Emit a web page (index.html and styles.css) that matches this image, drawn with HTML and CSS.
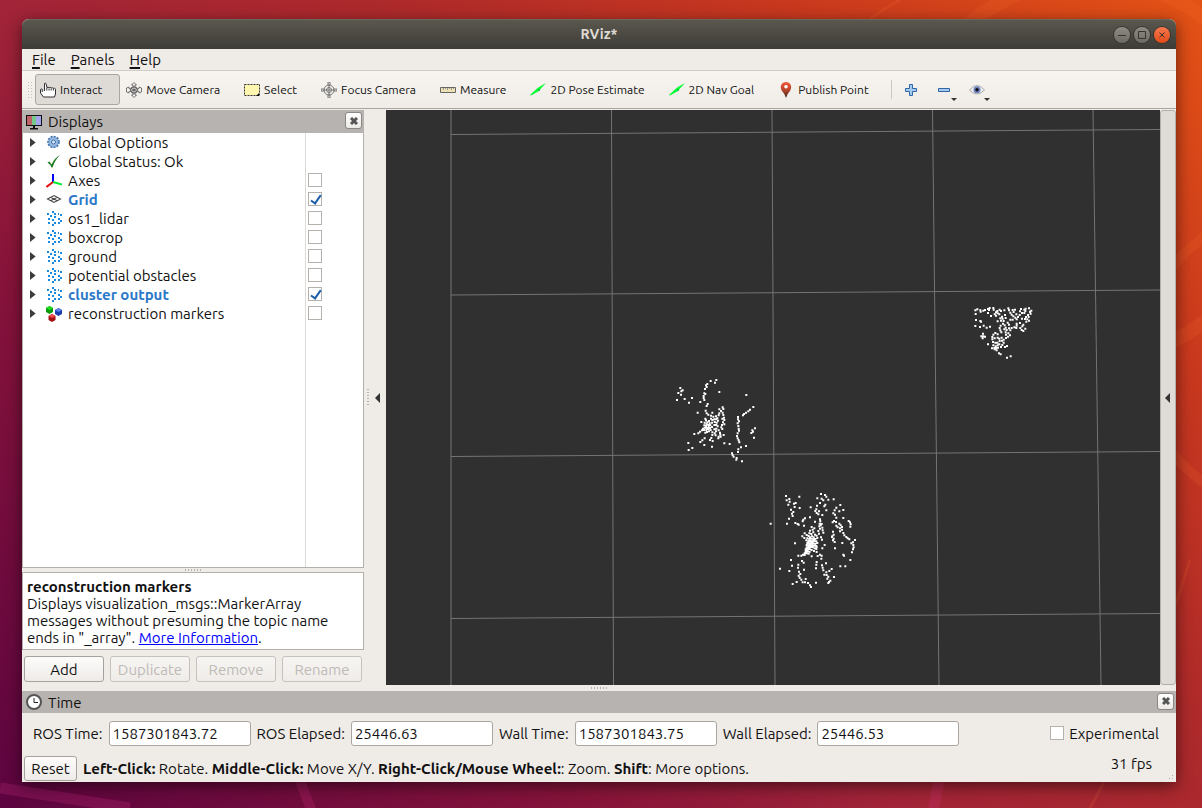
FILE: index.html
```html
<!DOCTYPE html>
<html lang="en">
<head>
<meta charset="utf-8">
<title>RViz*</title>
<link rel="stylesheet" href="styles.css">
</head>
<body class="desktop">
<svg class="wallpaper" viewBox="0 0 1202 808" preserveAspectRatio="none" aria-hidden="true">
  <g fill="none" stroke="#ff7a30" stroke-opacity=".14">
    <circle cx="1090" cy="170" r="190" stroke-width="14"/>
    <circle cx="1290" cy="360" r="150" stroke-width="10"/>
    <path d="M900 0Q870 15 850 40" stroke-width="3"/>
    <path d="M1190 560Q1140 720 1090 808" stroke-width="3"/>
  </g>
  <g fill="none" stroke="#e0358a" stroke-opacity=".2">
    <path d="M0 788L130 808" stroke-width="11"/>
    <path d="M296 770L312 812" stroke-width="10"/>
    <path d="M941 770L933 812" stroke-width="11"/>
  </g>
</svg>
<main class="window">
  <header class="titlebar">
    <h1 class="title">RViz*</h1>
    <div class="window-buttons">
      <button class="wbtn" aria-label="Minimize"><svg viewBox="0 0 16 16"><path d="M4 8.500h8"/></svg></button>
      <button class="wbtn" aria-label="Maximize"><svg viewBox="0 0 16 16"><path d="M4.500 4.500h7v7h-7z"/></svg></button>
      <button class="wbtn wbtn-close" aria-label="Close"><svg viewBox="0 0 16 16"><path d="M5.500 5.500l5 5m0-5l-5 5"/></svg></button>
    </div>
  </header>
  <nav class="menubar">
    <button class="menu"><u>F</u>ile</button>
    <button class="menu"><u>P</u>anels</button>
    <button class="menu"><u>H</u>elp</button>
  </nav>
  <div class="toolbar">
    <span class="grip"></span>
    <button class="tool active"><svg viewBox="0 0 16 16"><path d="M4.500 9V1.500Q5 .5 6 1.500L7 5.500q1.200-1 2 .3 1.200-1 2.200.2 1-.8 2.100.3 1.700-.6 2.200.8V12l-1 3H3.500L.5 11V7.500q.7-1 1.700-.3V10" fill="#fff" stroke="#333"/><path d="M6.800 5.500v3m2.200-2v2m2.200-2v2m2.200-2v2" stroke="#333" fill="none"/></svg>Interact</button>
    <button class="tool"><svg viewBox="0 0 16 16"><g fill="none" stroke="#555" stroke-width=".8"><path d="M8 .5l2.500 2.500H9v2l2.500 1.800L13 6.500V5l2.500 1v4L13 11V9.500l-1.500-.3L9 11v2h1.500L8 15.500 5.500 13H7v-2L4.500 9.200 3 9.500V11L.5 10V6L3 5v1.500l1.500.3L7 5V3H5.500z" fill="#f4f2ee"/><ellipse cx="8" cy="8" rx="3.600" ry="3"/><path d="M8 4v8M4 8h8M5 6l6 4M11 6l-6 4"/></g></svg>Move Camera</button>
    <button class="tool"><svg viewBox="0 0 16 16"><path d="M.5 2.500h15v11H.5z" fill="#fff6b0" stroke="#333" stroke-dasharray="2 1"/><path d="M15 11v3h-3z" fill="#111"/></svg>Select</button>
    <button class="tool"><svg viewBox="0 0 16 16"><g fill="none" stroke="#777"><circle cx="8" cy="8" r="5"/><circle cx="8" cy="8" r="2.500"/><path d="M7 0h2v3H7zM7 13h2v3H7zM0 7h3v2H0zM13 7h3v2h-3zM8 3v10M3 8h10"/></g></svg>Focus Camera</button>
    <button class="tool"><svg viewBox="0 0 16 16"><path d="M.5 5.500h15v5H.5z" fill="#eee2b4" stroke="#666"/><path d="M3.500 6v2m2-2v1m2-1v2m2-2v1m2-1v2m2-2v1" stroke="#999"/></svg>Measure</button>
    <button class="tool"><svg viewBox="0 0 16 16"><path d="M0 13L7 6.500l2-1.500 7-4-5 5.500-2 2.500-8 4.500z" fill="#0f3"/><path d="M8 7l2 1-1 1z" fill="#064"/></svg>2D Pose Estimate</button>
    <button class="tool"><svg viewBox="0 0 16 16"><path d="M0 13L7 6.500l2-1.500 7-4-5 5.500-2 2.500-8 4.500z" fill="#0f3"/><path d="M8 7l2 1-1 1z" fill="#064"/></svg>2D Nav Goal</button>
    <button class="tool"><svg viewBox="0 0 16 16"><defs><linearGradient id="pin" x2="0" y2="1"><stop offset="0" stop-color="#f35a3c"/><stop offset=".5" stop-color="#b9442c"/><stop offset="1" stop-color="#382a1c"/></linearGradient></defs><path d="M8 16Q7 12 4 9C1 4 4 0 8 0s7 4 4 9Q9 12 8 16z" fill="url(#pin)"/><circle cx="8" cy="4.800" r="1.800" fill="#fff"/></svg>Publish Point</button>
    <span class="divider"></span>
    <button class="tool-icon" aria-label="Add tool"><svg viewBox="0 0 16 16"><path d="M6.500 2.500h3v4h4v3h-4v4h-3v-4h-4v-3h4z" fill="#a9c8ee" stroke="#2f68a8"/></svg></button>
    <button class="tool-icon drop" aria-label="Remove tool"><svg viewBox="0 0 16 16"><path d="M2.500 6.500h11v3h-11z" fill="#a9c8ee" stroke="#2f68a8"/></svg></button>
    <button class="tool-icon drop" aria-label="Visibility"><svg viewBox="0 0 16 16"><path d="M.5 8Q8-1 15.500 8 8 16 .5 8z" fill="#eee" stroke="#aaa"/><circle cx="8" cy="7.700" r="3.500" fill="#6e82c0"/><circle cx="8" cy="7.700" r="1.700" fill="#111"/></svg></button>
  </div>

  <div class="workspace">
    <section class="displays">
      <div class="dock-head">
        <svg viewBox="0 0 16 16"><path d="M0 1h16v11H0z" fill="#111"/><path d="M1 2h5v9H1z" fill="#bd6468"/><path d="M6 2h4v9H6z" fill="#75c98a"/><path d="M10 2h5v9h-5z" fill="#a5a5ee"/><path d="M7 12h2v2h3v1.500H4V14h3z" fill="#111"/></svg>
        <h2 class="dock-title">Displays</h2>
        <button class="dock-close" aria-label="Close Displays"><svg viewBox="0 0 8 8"><path d="M1 1l6 6m0-6l-6 6"/></svg></button>
      </div>
      <ul class="tree">
        <li class="row"><button class="expander" aria-label="Expand"></button><svg viewBox="0 0 16 16"><circle cx="7.500" cy="7" r="5.200" fill="#9dbbe0" stroke="#3c70ae" stroke-width="2.200" stroke-dasharray="2 1"/><circle cx="7.500" cy="7" r="4.500" fill="#9dbbe0" stroke="#7fa6d4"/><circle cx="7.500" cy="7" r="2" fill="#dce8f6" stroke="#3c70ae"/></svg><span>Global Options</span></li>
        <li class="row"><button class="expander" aria-label="Expand"></button><svg viewBox="0 0 16 16"><path d="M1.500 8.500l2-1 2 3Q8.500 4 14 1 9 6 6.500 13.500h-1Q4 10 1.500 8.500z" fill="#1d7a1d"/></svg><span>Global Status: Ok</span></li>
        <li class="row"><button class="expander" aria-label="Expand"></button><svg viewBox="0 0 16 16"><path d="M7 9V1" stroke="#00f" stroke-width="2"/><path d="M7 9l9 2.500" stroke="#0e3" stroke-width="2"/><path d="M7 9l-6.500 5" stroke="#e01010" stroke-width="2"/></svg><label for="d1">Axes</label><input class="check" type="checkbox" id="d1"></li>
        <li class="row on"><button class="expander" aria-label="Expand"></button><svg viewBox="0 0 16 16"><path d="M1.500 7L8 3.500 14.500 7 8 10.500zM4.700 5.200l6.500 3.600M11.300 5.200L4.700 8.800" fill="none" stroke="#444" stroke-width="1.100"/></svg><label for="d2">Grid</label><input class="check" type="checkbox" id="d2" checked></li>
        <li class="row"><button class="expander" aria-label="Expand"></button><svg viewBox="0 0 16 16"><path id="cloud" d="M6 0h2v2H6zM1 2h2v2H1zM8 2h2v2H8zM12 2h1v2h-1zM14 3h2v2h-2zM4 4h2v2H4zM8 5h2v2H8zM2 7h2v2H2zM6 8h2v2H6zM12 7h2v2h-2zM14 9h2v2h-2zM2 11h2v2H2zM8 11h2v2H8zM12 11h2v2h-2zM6 13h2v2H6z" fill="#198ae0"/></svg><label for="d3">os1_lidar</label><input class="check" type="checkbox" id="d3"></li>
        <li class="row"><button class="expander" aria-label="Expand"></button><svg viewBox="0 0 16 16"><use href="#cloud"/></svg><label for="d4">boxcrop</label><input class="check" type="checkbox" id="d4"></li>
        <li class="row"><button class="expander" aria-label="Expand"></button><svg viewBox="0 0 16 16"><use href="#cloud"/></svg><label for="d5">ground</label><input class="check" type="checkbox" id="d5"></li>
        <li class="row"><button class="expander" aria-label="Expand"></button><svg viewBox="0 0 16 16"><use href="#cloud"/></svg><label for="d6">potential obstacles</label><input class="check" type="checkbox" id="d6"></li>
        <li class="row on"><button class="expander" aria-label="Expand"></button><svg viewBox="0 0 16 16"><use href="#cloud"/></svg><label for="d7">cluster output</label><input class="check" type="checkbox" id="d7" checked></li>
        <li class="row"><button class="expander" aria-label="Expand"></button><svg viewBox="0 0 16 16"><path d="M3.500 0L7 2v4L3.500 8 0 6V2z" fill="#0a9a0a"/><path d="M3.500 0L7 2 3.500 4 0 2z" fill="#1ee01e"/><path d="M12.500 2L16 4v4l-3.500 2L9 8V4z" fill="#1c3fae"/><path d="M12.500 2L16 4l-3.500 2L9 4z" fill="#5f84ee"/><path d="M6 8l3.500 2v4L6 16l-3.500-2v-4z" fill="#a80f14"/><path d="M6 8l3.500 2L6 12l-3.500-2z" fill="#ee4a4a"/></svg><label for="d8">reconstruction markers</label><input class="check" type="checkbox" id="d8"></li>
      </ul>
      <div class="splitter"><span class="dots"></span></div>
      <div class="description"><b>reconstruction markers</b><br>Displays visualization_msgs::MarkerArray messages without presuming the topic name ends in "_array". <a href="#info">More Information</a>.</div>
      <div class="actions">
        <button class="btn">Add</button>
        <button class="btn" disabled>Duplicate</button>
        <button class="btn" disabled>Remove</button>
        <button class="btn" disabled>Rename</button>
      </div>
    </section>
    <div class="side-splitter"><span class="dots dots-vertical"></span></div>
    <button class="collapse" aria-label="Hide left dock"></button>
    <svg class="view" viewBox="386 110 774 575" preserveAspectRatio="xMinYMin slice" role="img" aria-label="Point cloud view">
      <path d="M451 110V685M611.500 110L613.500 685M772 110L775 685M932.500 110L939 685M1093 110L1101 685M451 134.500L1160 129.500M451 295L1160 290M451 456.500L1160 451.500M451 618.500L1160 613.500" fill="none" stroke="#747474"/>
      <g class="points">
        <g transform="translate(660 370) scale(.3333)">
          <path d="M61 54h0M55 69h0M64 64h0M68 61h0M63 74h0M51 90h0M74 87h0M96 84h0M87 98h0M169 30h0M152 33h0M165 38h0M142 42h0M138 46h0M140 51h0M135 57h0M178 66h0M133 70h0M136 72h0M131 78h0M131 84h0M133 90h0M121 96h0M259 75h0M143 102h0M140 108h0M137 122h0M113 128h0M188 112h0M190 117h0M178 118h0M183 123h0M188 128h0M178 130h0M176 136h0M190 135h0M192 143h0M280 111h0M270 119h0M265 124h0M258 128h0M252 132h0M249 136h0M234 141h0M234 148h0M237 154h0M233 160h0M235 168h0M236 176h0M237 182h0M233 190h0M231 198h0M233 205h0M236 211h0M238 217h0M285 175h0M277 181h0M279 185h0M274 189h0M282 203h0M258 228h0M243 232h0M235 238h0M234 246h0M216 250h0M218 256h0M221 260h0M230 264h0M229 269h0M246 274h0M209 222h0M193 220h0M191 195h0M182 200h0M175 205h0M156 230h0M158 213h0M150 210h0M154 204h0M133 225h0M134 205h0M127 211h0M121 216h0M85 219h0M97 234h0M86 240h0M103 192h0M115 190h0M120 185h0"/>
          <path d="M140 130h0M145 134h0M157 128h0M153 137h0M160 140h0M168 139h0M136 146h0M138 151h0M124 156h0M134 158h0M142 157h0M147 153h0M153 146h0M157 150h0M163 148h0M169 148h0M174 152h0M164 156h0M170 158h0M156 158h0M149 160h0M140 163h0M133 166h0M138 168h0M145 165h0M151 166h0M146 171h0M140 174h0M134 173h0M129 176h0M126 181h0M132 180h0M139 180h0M145 177h0M150 174h0M152 180h0M147 184h0M141 186h0M136 188h0M156 171h0M163 165h0M169 165h0M173 169h0M169 176h0M163 178h0M168 184h0M164 190h0M157 187h0M157 195h0M167 196h0M176 181h0M176 200h0M187 146h0M193 150h0M189 157h0M193 163h0M186 165h0M184 172h0M187 177h0M180 188h0M181 194h0M172 145h0"/>
        </g>
        <g transform="translate(760 485) scale(.3333)">
          <path d="M78 33h0M80 46h0M88 42h0M89 50h0M85 59h0M107 54h0M104 66h0M102 56h0M119 69h0M93 74h0M100 81h0M96 86h0M98 93h0M87 101h0M81 116h0M118 35h0M106 114h0M113 117h0M116 119h0M130 104h0M135 100h0M128 109h0M132 122h0M150 97h0M152 67h0M165 110h0M183 27h0M195 30h0M172 40h0M185 41h0M199 35h0M205 44h0M190 46h0M180 54h0M221 43h0M196 59h0M193 64h0M171 62h0M169 73h0M166 78h0M177 79h0M175 88h0M187 90h0M199 76h0M170 84h0M241 60h0M229 68h0M224 76h0M238 79h0M250 75h0M220 85h0M225 89h0M229 98h0M222 108h0M218 112h0M228 111h0M250 99h0M266 108h0M270 112h0M272 118h0M271 125h0M238 116h0M242 121h0M246 126h0M240 130h0M233 127h0M229 122h0M240 139h0M246 134h0M250 144h0M253 151h0M259 156h0M263 160h0M268 163h0M285 165h0M279 172h0M274 175h0M280 180h0M281 187h0M279 193h0M276 202h0M247 174h0M250 209h0M252 212h0M271 225h0M241 244h0M256 244h0M225 190h0M219 140h0M221 149h0M216 156h0M221 161h0M219 166h0M224 171h0M217 154h0M32 116h0M105 175h0M60 251h0M93 225h0M88 258h0M96 242h0M115 239h0M114 248h0M126 228h0M131 233h0M132 254h0M117 260h0M121 267h0M116 272h0M119 278h0M124 284h0M137 282h0M128 292h0M135 292h0M110 291h0M98 297h0M144 294h0M150 301h0M153 306h0M168 293h0M168 250h0M169 239h0M170 231h0M185 212h0M184 221h0M186 241h0M188 248h0M190 256h0M198 235h0M199 262h0M193 269h0M200 270h0M205 275h0M202 281h0M208 258h0M215 252h0M222 276h0M211 287h0M207 291h0M205 294h0"/>
          <path d="M180 103h0M181 109h0M179 116h0M182 121h0M185 117h0M178 124h0M180 131h0M187 128h0M188 136h0M190 143h0M175 138h0M177 146h0M170 152h0M172 159h0M183 157h0M186 164h0M194 180h0M187 190h0M155 126h0M163 130h0M158 134h0M150 137h0M160 142h0M148 145h0M154 147h0M165 149h0M140 150h0M134 145h0M127 154h0M133 159h0M146 153h0M150 157h0M156 154h0M161 157h0M142 160h0M148 163h0M154 161h0M160 163h0M166 162h0M139 166h0M145 169h0M151 168h0M157 169h0M163 168h0M169 169h0M142 174h0M148 175h0M154 174h0M160 175h0M166 176h0M172 174h0M140 180h0M146 181h0M152 180h0M158 181h0M164 182h0M169 183h0M140 187h0M146 187h0M152 186h0M158 187h0M164 190h0M169 192h0M137 193h0M143 193h0M149 192h0M155 195h0M162 198h0M170 201h0M137 199h0M143 199h0M149 200h0M134 205h0M140 205h0M146 206h0M129 209h0M134 210h0M124 212h0M115 212h0M155 214h0M173 213h0M180 209h0M170 186h0"/>
        </g>
        <g transform="translate(960 295) scale(.3333)">
          <path d="M46 46h0M52 43h0M47 57h0M61 46h0M62 50h0M70 47h0M75 45h0M84 42h0M89 39h0M87 45h0M100 39h0M101 44h0M84 54h0M93 63h0M104 58h0M108 52h0M112 48h0M113 55h0M119 44h0M123 48h0M118 58h0M108 62h0M133 46h0M135 60h0M145 40h0M147 46h0M151 53h0M158 45h0M165 44h0M161 51h0M155 59h0M160 64h0M169 58h0M174 66h0M166 68h0M170 73h0M158 74h0M183 42h0M180 49h0M186 54h0M179 60h0M193 44h0M197 41h0M196 48h0M193 54h0M207 40h0M214 47h0M210 50h0M212 56h0M204 60h0M206 66h0M198 66h0M195 72h0M202 73h0M207 77h0M199 80h0M186 71h0M48 75h0M46 93h0M61 78h0M63 80h0M60 96h0M71 92h0M80 98h0M90 95h0M69 116h0M64 124h0M70 124h0M75 125h0M68 130h0M84 148h0M126 65h0M128 71h0M121 70h0M123 77h0M113 79h0M131 78h0M137 69h0M143 83h0M151 74h0M147 89h0M129 86h0M134 91h0M122 92h0M119 99h0M121 106h0M124 112h0M137 98h0M133 103h0M140 105h0M137 112h0M147 100h0M155 99h0M163 97h0M151 106h0M170 92h0M169 99h0M170 86h0M180 84h0M190 89h0M187 94h0M181 99h0M185 105h0M190 108h0M196 101h0M138 119h0M145 115h0M150 121h0M144 125h0M138 129h0M131 134h0M125 128h0M126 137h0M131 143h0M127 150h0M123 156h0M106 114h0M100 119h0M113 118h0M97 126h0M97 133h0M104 130h0M113 128h0M118 131h0M119 138h0M112 143h0M106 143h0M99 141h0M100 151h0M107 154h0M113 151h0M118 148h0M96 160h0M103 159h0M109 159h0M114 158h0M104 163h0M110 166h0M141 153h0M135 156h0M117 175h0M122 178h0M152 184h0M141 188h0"/>
        </g>
      </g>
    </svg>
    <button class="collapse collapse-right" aria-label="Hide right dock"></button>
  </div>

  <div class="splitter splitter-wide"><span class="dots"></span></div>
  <section class="time">
    <div class="dock-head">
      <svg viewBox="0 0 16 16"><circle cx="8" cy="8" r="7" fill="#fff" stroke="#555" stroke-width="2"/><path d="M8 4v4.500h4" fill="none" stroke="#222"/></svg>
      <h2 class="dock-title">Time</h2>
      <button class="dock-close" aria-label="Close Time"><svg viewBox="0 0 8 8"><path d="M1 1l6 6m0-6l-6 6"/></svg></button>
    </div>
    <div class="fields">
      <label for="t1">ROS Time:</label><input class="field" id="t1" value="1587301843.72">
      <label for="t2">ROS Elapsed:</label><input class="field" id="t2" value="25446.63">
      <label for="t3">Wall Time:</label><input class="field" id="t3" value="1587301843.75">
      <label for="t4">Wall Elapsed:</label><input class="field" id="t4" value="25446.53">
      <span class="experimental"><input class="check" type="checkbox" id="exp"><label for="exp">Experimental</label></span>
    </div>
  </section>
  <footer class="status">
    <button class="btn reset">Reset</button>
    <p class="hint"><b>Left-Click:</b> Rotate. <b>Middle-Click:</b> Move X/Y. <b>Right-Click/Mouse Wheel:</b>: Zoom. <b>Shift</b>: More options.</p>
    <span class="fps">31 fps</span>
    <span class="size-grip"></span>
  </footer>
</main>
</body>
</html>
```
FILE: styles.css
```css
* { box-sizing: border-box; }

.desktop {
  margin: 0;
  height: 100vh;
  padding: 19px 26px 26px 22px;
  position: relative;
  overflow: hidden;
  display: flex;
  background: linear-gradient(42deg, #5c0440 0%, #86133a 28%, #a02338 42%, #ae2a2a 62%, #c8381e 80%, #e35215 100%);
  font: 15px/17px Ubuntu, "Noto Sans", sans-serif;
  color: #111;
}
.wallpaper { position: absolute; inset: 0; width: 100%; height: 100%; }

button, input { font: inherit; color: inherit; margin: 0; }
button { padding: 0; border: 0; background: none; }

.window {
  position: relative;
  flex: 1;
  min-width: 0;
  display: flex;
  flex-direction: column;
  background: #efebe7;
  border-radius: 7px 7px 0 0;
  box-shadow: 0 4px 16px rgba(0, 0, 0, .55);
}

.titlebar {
  height: 30px;
  display: grid;
  grid-template-columns: 1fr auto 1fr;
  align-items: center;
  border-radius: 7px 7px 0 0;
  border-top: 1px solid #6a675d;
  background: linear-gradient(#5a574e, #3d3c37);
}
.title { grid-column: 2; margin: 0; font-size: 14px; line-height: 17px; font-weight: 700; color: #dfdbd2; }
.window-buttons { justify-self: end; display: flex; gap: 4px; padding-right: 6px; }
.wbtn { width: 16px; height: 16px; border-radius: 50%; background: linear-gradient(#8e8c83, #6c6a63); box-shadow: 0 0 0 1px #35342f; }
.wbtn svg { display: block; fill: none; stroke: #35342f; }
.wbtn-close { background: linear-gradient(#f7784f, #e34b18); }

.menubar { display: flex; gap: 15px; height: 22px; padding-left: 10px; border-bottom: 1px solid #d0ccc7; }
.menu u { text-decoration-thickness: 2px; text-underline-offset: 2px; }

.toolbar {
  display: flex;
  align-items: center;
  height: 38px;
  padding-left: 5px;
  background: linear-gradient(#f8f5f1, #efebe6);
  border-bottom: 1px solid #aaa6a2;
  font-size: 12px;
  white-space: nowrap;
}
.grip { width: 5px; height: 17px; margin-right: 3px; background: radial-gradient(circle, #c2beb9 1px, transparent 1px) 0 0 / 3px 3px; }
.tool { display: flex; align-items: center; gap: 4px; height: 31px; padding: 0 17px 0 5px; border: 1px solid transparent; border-radius: 3px; }
.tool svg, .tool-icon svg, .dock-head svg, .row svg { width: 16px; height: 16px; flex: none; }
.tool.active { background: #dedad6; border-color: #aaa6a2; padding-left: 4px; }
.divider { width: 1px; height: 19px; margin: 0 8px 0 4px; background: #cbc7c2; }
.tool-icon { position: relative; display: flex; width: 33px; padding-left: 3px; }
.drop::after { content: ""; position: absolute; left: 18px; top: 16px; border: 3px solid transparent; border-top-color: #333; border-bottom: 0; }

.workspace { flex: 1; min-height: 0; display: flex; padding-top: 1px; }
.displays { width: 342px; flex: none; display: flex; flex-direction: column; }
.dock-head { display: flex; align-items: center; gap: 6px; height: 23px; padding: 0 2px 0 4px; background: #b7b3b0; }
.dock-title { flex: 1; margin: 0; font-size: 15px; line-height: 17px; font-weight: 400; }
.dock-close { width: 17px; height: 17px; margin-bottom: 2px; display: grid; place-items: center; border: 1px solid #8b8783; border-radius: 3px; background: linear-gradient(#fff, #ece9e5); }
.dock-head .dock-close svg { width: 8px; height: 8px; stroke: #555; stroke-width: 3; }

.tree {
  flex: 1;
  margin: 0;
  padding: 0;
  list-style: none;
  border: solid #b3afab;
  border-width: 0 1px 1px;
  background: linear-gradient(90deg, #ddd9d6 1px, transparent 1px) right / 58px 100% no-repeat #fff;
}
.row { display: flex; align-items: center; height: 19px; padding: 0 41px 0 7px; }
.row svg { margin: 0 6px 0 9px; }
.row .check { margin: 0 0 1px auto; }
.on { color: #2a78c8; font-weight: 700; }
.expander { width: 7px; height: 9px; background: #3c3c3c; clip-path: polygon(0 0, 80% 50%, 0 100%); }
.check {
  appearance: none;
  position: relative;
  width: 14px;
  height: 14px;
  border: 1px solid #b5b1ad;
  background: #fff;
}
.check:checked::after {
  content: "";
  position: absolute;
  left: 4px;
  top: 0;
  width: 4px;
  height: 9px;
  border: solid #1c5fa8;
  border-width: 0 2px 2px 0;
  transform: rotate(35deg);
}

.splitter { height: 4px; display: flex; justify-content: center; align-items: center; }
.splitter-wide { height: 6px; }
.dots { width: 17px; height: 2px; background: repeating-linear-gradient(90deg, #b5b1ad 0 1px, transparent 1px 3px); }
.dots-vertical { width: 2px; height: 17px; background: repeating-linear-gradient(#b5b1ad 0 1px, transparent 1px 3px); }
.side-splitter { width: 7px; flex: none; display: flex; justify-content: center; align-items: center; }
.description { height: 78px; padding: 5px 4px 0; border: 1px solid #b3afab; background: #fff; }
.description a { color: #00f; }
.actions { display: grid; grid-template-columns: repeat(4, 1fr); gap: 6px; padding: 6px 2px 3px; }
.btn { height: 26px; border: 1px solid #a5a19d; border-radius: 3px; background: linear-gradient(#fdfcfb, #eeebe8); }
.btn:disabled { color: #bebab6; border-color: #c5c1bd; background: linear-gradient(#f7f5f3, #efece9); }

.collapse { width: 15px; flex: none; display: flex; justify-content: center; align-items: center; padding-right: 2px; }
.collapse::before { content: ""; border: 5px solid transparent; border-right-color: #333; border-left: 0; }
.collapse-right { width: 16px; border: 1px solid #b3afab; border-radius: 3px; background: #dfdbd7; }
.view { flex: 1; min-width: 0; height: 100%; background: #303030; }
.points { fill: none; stroke: #fff; stroke-width: 6; stroke-linecap: square; }

.time .dock-head { height: 22px; }
.fields { display: flex; align-items: center; gap: 6px; height: 40px; padding: 0 17px 0 11px; white-space: nowrap; }
.field { width: 142px; height: 25px; min-width: 0; padding: 0 3px; border: 1px solid #aaa6a2; border-radius: 3px; background: #fff; }
.experimental { margin-left: auto; display: flex; align-items: center; gap: 5px; }

.status { position: relative; display: flex; align-items: center; height: 29px; padding: 2px 24px 0 2px; white-space: nowrap; }
.reset { width: 53px; height: 25px; }
.hint { margin: 0 0 0 6px; flex: 1; }
.fps { align-self: flex-start; }
.size-grip {
  position: absolute;
  right: 1px;
  bottom: 1px;
  width: 10px;
  height: 10px;
  background: radial-gradient(circle, #b0aca8 1px, transparent 1px) 0 0 / 3px 3px;
  clip-path: polygon(100% 0, 100% 100%, 0 100%);
}
```
